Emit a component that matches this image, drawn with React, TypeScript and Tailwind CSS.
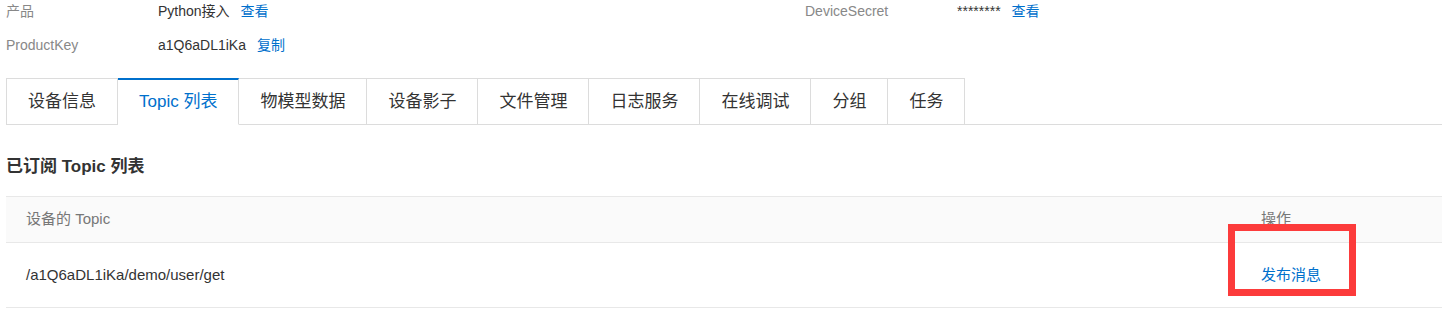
import React from 'react'

const tabs = ['设备信息', 'Topic 列表', '物模型数据', '设备影子', '文件管理', '日志服务', '在线调试', '分组', '任务']

function InfoItem({ label, value, link }: { label: string; value: string; link: string }) {
  return (
    <div className="flex w-[799px] shrink-0 items-center h-[22px]">
      <div className="w-[152px] shrink-0 text-[#888]">{label}</div>
      <div className="text-[#333]">{value}</div>
      <a className="ml-[11px] text-[#0070cc] cursor-pointer">{link}</a>
    </div>
  )
}

export default function App() {
  const active = 1
  return (
    <div className="relative min-h-[316px] bg-white pl-[6px] text-[14px] font-[family-name:'Liberation_Sans','Noto_Sans_CJK_SC',sans-serif] overflow-hidden">
      {/* Device info */}
      <div className="flex">
        <InfoItem label="产品" value="Python接入" link="查看" />
        <InfoItem label="DeviceSecret" value="********" link="查看" />
      </div>
      <div className="flex mt-[12px]">
        <InfoItem label="ProductKey" value="a1Q6aDL1iKa" link="复制" />
      </div>

      {/* Tabs */}
      <div className="mt-[22px] flex border-b border-[#dcdcdc]">
        {tabs.map((t, i) => (
          <div
            key={t}
            className={
              i === active
                ? 'h-[47px] -mb-px flex items-center px-[21px] text-[17px] text-[#0070cc] bg-white border-t-2 border-t-[#0070cc] border-r border-r-[#dcdcdc] border-b border-b-white'
                : i === 0
                ? 'h-[47px] -mb-px flex items-center px-[21px] text-[17px] text-[#333] bg-white border border-[#dcdcdc]'
                : 'h-[47px] -mb-px flex items-center px-[21px] text-[17px] text-[#333] bg-white border border-l-0 border-[#dcdcdc]'
            }
          >
            {t}
          </div>
        ))}
      </div>

      <h2 className="mt-[30px] text-[17px] leading-[24px] font-bold text-[#333]">已订阅 Topic 列表</h2>

      {/* Table */}
      <div className="mt-[17px] border-t border-[#e8e8e8] text-[15px]">
        <div className="grid grid-cols-[1fr_201px] h-[46px] items-center bg-[#fafafa] border-b border-[#e8e8e8] text-[#777]">
          <div className="px-5">设备的 Topic</div>
          <div className="px-5">操作</div>
        </div>
        <div className="grid grid-cols-[1fr_201px] h-[65px] items-center border-b border-[#e8e8e8] text-[#333]">
          <div className="px-5">/a1Q6aDL1iKa/demo/user/get</div>
          <div className="px-5">
            <a className="text-[#0070cc] cursor-pointer">发布消息</a>
          </div>
        </div>
      </div>

      {/* Highlight annotation */}
      <div className="absolute left-[1228px] top-[224px] w-[128px] h-[72px] border-[7px] border-[#fc3b3b] pointer-events-none" />
    </div>
  )
}
